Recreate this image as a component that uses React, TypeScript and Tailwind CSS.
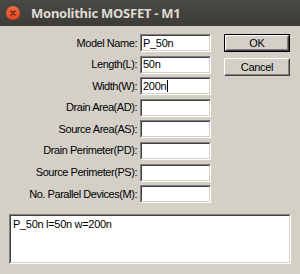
import React from "react";

const fields = [
  { label: "Model Name:", value: "P_50n" },
  { label: "Length(L):", value: "50n" },
  { label: "Width(W):", value: "200n", caret: true },
  { label: "Drain Area(AD):", value: "" },
  { label: "Source Area(AS):", value: "" },
  { label: "Drain Perimeter(PD):", value: "" },
  { label: "Source Perimeter(PS):", value: "" },
  { label: "No. Parallel Devices(M):", value: "" },
];

function Sunken({ children, className }: { children?: React.ReactNode; className?: string }) {
  // classic win32 sunken edit frame
  return (
    <div className={`border border-t-[#808080] border-l-[#808080] border-b-white border-r-white ${className ?? ""}`}>
      <div className="w-full h-full border border-t-[#404040] border-l-[#404040] border-b-[#d4d0c8] border-r-[#d4d0c8] bg-white">
        {children}
      </div>
    </div>
  );
}

function Button({ label, primary }: { label: string; primary?: boolean }) {
  return (
    <div className={`w-[66px] h-[18px] ${primary ? "border border-black" : ""}`}>
      <div className="w-full h-full border border-t-white border-l-white border-b-[#404040] border-r-[#404040] bg-[#d4d0c8]">
        <div className="w-full h-full border border-transparent border-b-[#808080] border-r-[#808080] flex items-center justify-center text-[11px] text-black leading-none tracking-[-0.3px]">
          {label}
        </div>
      </div>
    </div>
  );
}

export default function App() {
  return (
    <div className="w-[300px] h-[274px] bg-[#d4d0c8] overflow-hidden font-['Liberation_Sans',Arial,sans-serif]">
      {/* title bar */}
      <div className="h-[26px] bg-gradient-to-b from-[#4a4945] to-[#3c3b37] flex items-center pl-[6px]">
        <div className="w-[14px] h-[14px] rounded-full bg-gradient-to-b from-[#f26d45] to-[#dd4418] flex items-center justify-center">
          <svg width="6" height="6" viewBox="0 0 6 6">
            <path d="M1 1L5 5M5 1L1 5" stroke="#5a1a0a" strokeWidth="1.3" strokeLinecap="round" />
          </svg>
        </div>
        <span className="ml-[11px] text-[13px] font-bold text-[#dfdbd2] font-['Noto_Sans',sans-serif] leading-none tracking-[-0.25px]">
          Monolithic MOSFET - M1
        </span>
      </div>

      {/* body */}
      <div className="pt-[8px]">
        <div className="flex">
          <div className="flex flex-col gap-y-[3.6px]">
            {fields.map((f) => (
              <div key={f.label} className="flex items-center">
                <div className="w-[138px] text-right text-[11px] text-black leading-none pr-[1px] tracking-[-0.45px]">{f.label}</div>
                <Sunken className="ml-[2px] w-[71px] h-[18px]">
                  <div className="h-full flex items-center pl-[1px] text-[11px] text-black leading-none tracking-[-0.3px]">
                    {f.value}
                    {f.caret && <span className="inline-block ml-[1px] w-[1px] h-[12px] bg-black" />}
                  </div>
                </Sunken>
              </div>
            ))}
          </div>
          <div className="ml-[13px] flex flex-col gap-[6px]">
            <Button label="OK" primary />
            <Button label="Cancel" />
          </div>
        </div>

        <Sunken className="mt-[11px] ml-[9px] w-[282px] h-[50px]">
          <div className="pl-[2px] pt-[2px] text-[11px] text-black leading-[13px] tracking-[-0.3px]">P_50n l=50n w=200n</div>
        </Sunken>
      </div>
    </div>
  );
}
